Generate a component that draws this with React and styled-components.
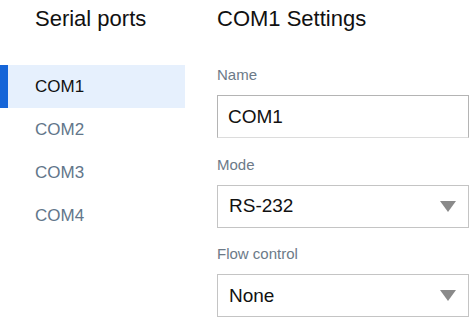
import { useState } from "react";
import styled, { createGlobalStyle } from "styled-components";

const PORTS = ["COM1", "COM2", "COM3", "COM4"];

const GlobalStyle = createGlobalStyle`
  html, body {
    margin: 0;
    padding: 0;
    background: #ffffff;
    font-family: "Liberation Sans", Arial, sans-serif;
  }
  * {
    box-sizing: border-box;
  }
`;

export default function App() {
  const [selecionada, setSelecionada] = useState("COM1");

  return (
    <>
      <GlobalStyle />
      <Page>
        <Sidebar>
          <Titulo recuo={35}>Serial ports</Titulo>
          <Lista>
            {PORTS.map((port) => (
              <Item
                key={port}
                ativo={port === selecionada ? 1 : 0}
                onClick={() => setSelecionada(port)}
              >
                {port}
              </Item>
            ))}
          </Lista>
        </Sidebar>
        <Main>
          <Titulo>{selecionada} Settings</Titulo>
          <Form>
            <Campo>
              <Rotulo>Name</Rotulo>
              <Entrada value={selecionada} readOnly />
            </Campo>
            <Campo>
              <Rotulo>Mode</Rotulo>
              <Combo>
                <span>RS-232</span>
                <Seta />
              </Combo>
            </Campo>
            <Campo>
              <Rotulo>Flow control</Rotulo>
              <Combo>
                <span>None</span>
                <Seta />
              </Combo>
            </Campo>
          </Form>
        </Main>
      </Page>
    </>
  );
}

const Page = styled.div`
  display: flex;
  width: 472px;
  height: 319px;
  overflow: hidden;
  gap: 32px;
`;

const Sidebar = styled.aside`
  width: 185px;
  flex-shrink: 0;
  padding-top: 6px;
`;

const Titulo = styled.h1`
  margin: 0;
  padding-left: ${(props) => props.recuo || 0}px;
  font-family: "Liberation Sans", Arial, sans-serif;
  font-size: 22px;
  line-height: 26px;
  font-weight: 400;
  color: #111111;
`;

const Lista = styled.ul`
  list-style: none;
  margin: 33px 0 0;
  padding: 0;
`;

const Item = styled.li`
  height: 43px;
  line-height: 43px;
  padding-left: 35px;
  font-size: 17px;
  cursor: pointer;
  color: ${(props) => (props.ativo ? "#111111" : "#62768a")};
  background: ${(props) => (props.ativo ? "#e6f0fd" : "transparent")};
  box-shadow: ${(props) => (props.ativo ? "inset 8px 0 0 #1565d8" : "none")};
`;

const Main = styled.main`
  width: 252px;
  flex-shrink: 0;
  padding-top: 6px;
`;

const Form = styled.div`
  display: flex;
  flex-direction: column;
  gap: 17.5px;
  margin-top: 34px;
`;

const Campo = styled.div`
  display: flex;
  flex-direction: column;
  gap: 11px;
`;

const Rotulo = styled.label`
  font-size: 15px;
  line-height: 18px;
  color: #6c7a88;
`;

const Entrada = styled.input`
  width: 252px;
  height: 43px;
  padding: 0 10px;
  font-family: "Liberation Sans", Arial, sans-serif;
  font-size: 19px;
  color: #111111;
  border: 1px solid #b4b4b4;
  border-bottom-color: #dcdcdc;
  border-radius: 0;
  outline: none;
  background: #ffffff;
`;

const Combo = styled.div`
  display: flex;
  align-items: center;
  justify-content: space-between;
  width: 252px;
  height: 43px;
  padding: 0 12px 0 11px;
  font-size: 19px;
  color: #111111;
  border: 1px solid #c4c4c4;
  background: #ffffff;
  cursor: pointer;
`;

const Seta = styled.span`
  width: 0;
  height: 0;
  border-left: 8px solid transparent;
  border-right: 8px solid transparent;
  border-top: 11px solid #8a8a8a;
`;
